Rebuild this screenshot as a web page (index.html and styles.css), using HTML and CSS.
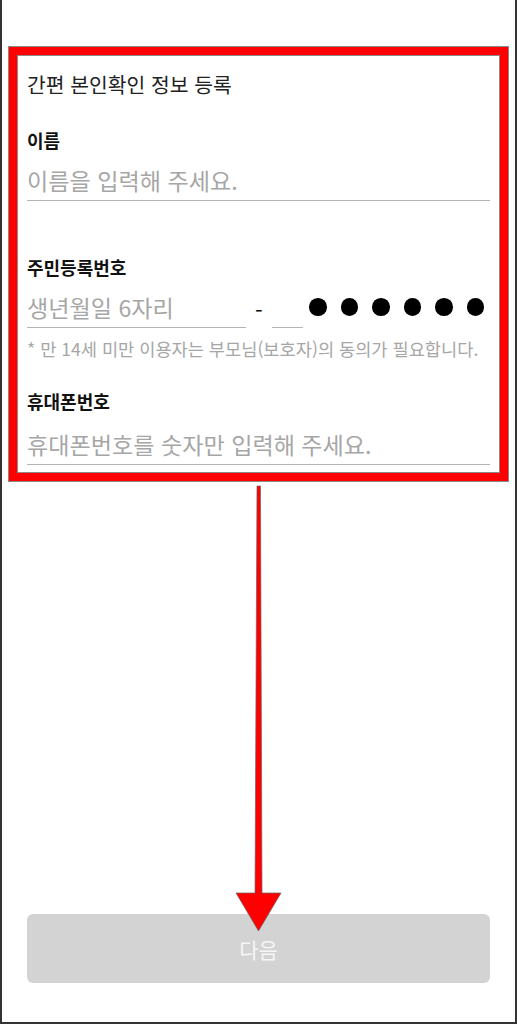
FILE: index.html
```html
<!DOCTYPE html>
<html lang="ko">
<head>
<meta charset="utf-8">
<title>간편 본인확인 정보 등록</title>
<link rel="stylesheet" href="styles.css">
</head>
<body>
<div class="frame">
  <main class="content">
    <h1 class="title">간편 본인확인 정보 등록</h1>

    <div class="label label-name">이름</div>
    <div class="field field-name"><span class="ph">이름을 입력해 주세요.</span></div>

    <div class="label label-rrn">주민등록번호</div>
    <div class="rrn-row">
      <div class="field field-birth"><span class="ph">생년월일 6자리</span></div>
      <span class="dash">-</span>
      <div class="field field-gender"></div>
      <div class="dots">
        <span class="dot"></span><span class="dot"></span><span class="dot"></span><span class="dot"></span><span class="dot"></span><span class="dot"></span>
      </div>
    </div>
    <p class="note">* 만 14세 미만 이용자는 부모님(보호자)의 동의가 필요합니다.</p>

    <div class="label label-phone">휴대폰번호</div>
    <div class="field field-phone"><span class="ph">휴대폰번호를 숫자만 입력해 주세요.</span></div>

    <button class="next" type="button">다음</button>
  </main>

  <div class="highlight"></div>
  <svg class="arrow" width="517" height="1024" viewBox="0 0 517 1024">
    <polygon points="257,486 260.5,486 262,893 281,893 258.5,931 236,893 255,893" fill="#ff0000" stroke="#666" stroke-width="0.7"/>
  </svg>
</div>
</body>
</html>
```

FILE: styles.css
```css
html, body {
  margin: 0;
  padding: 0;
  background: #ffffff;
}

body {
  font-family: "Noto Sans CJK KR", "Noto Sans", sans-serif;
}

.frame {
  position: relative;
  width: 517px;
  height: 1024px;
  box-sizing: border-box;
  border-left: 2px solid #333333;
  border-right: 2px solid #333333;
  border-bottom: 2px solid #333333;
  overflow: hidden;
}

.content {
  height: 100%;
  box-sizing: border-box;
  padding: 72px 25px 39px 25px;
  display: flex;
  flex-direction: column;
}

.title {
  margin: 0;
  font-size: 20.4px;
  line-height: 24px;
  font-weight: 400;
  color: #222222;
}

.label {
  font-size: 18px;
  line-height: 22px;
  font-weight: 700;
  color: #111111;
}

.label-name { margin-top: 33px; }
.label-rrn { margin-top: 55px; }
.label-phone { margin-top: 31px; }

.field {
  padding: 4px 0 5px 0;
  height: 30px;
  line-height: 30px;
  font-size: 23.1px;
  border-bottom: 1.5px solid #b3b3b3;
  white-space: nowrap;
}

.ph {
  color: #a6a6a6;
}

.field-name { margin-top: 10px; }
.field-phone { margin-top: 13px; }

.rrn-row {
  margin-top: 10px;
  display: flex;
  align-items: flex-start;
}

.field-birth {
  width: 219px;
  flex: none;
}

.dash {
  flex: none;
  margin-left: 9px;
  width: 7px;
  margin-top: 4px;
  height: 30px;
  line-height: 34px;
  font-size: 22px;
  color: #111111;
  text-align: center;
}

.field-gender {
  flex: none;
  width: 31px;
  margin-left: 10px;
}

.dots {
  flex: none;
  margin-left: 6px;
  display: flex;
  gap: 14px;
  padding-top: 10px;
}

.dot {
  width: 17.5px;
  height: 17.5px;
  border-radius: 50%;
  background: #000000;
}

.note {
  margin: 11px 0 0 0;
  font-size: 17.6px;
  line-height: 20px;
  color: #a6a6a6;
  white-space: nowrap;
}

.next {
  margin-top: auto;
  height: 69px;
  width: 100%;
  border: none;
  border-radius: 6px;
  background: #d3d3d3;
  color: #f6f6f6;
  font-family: "Noto Sans CJK KR", "Noto Sans", sans-serif;
  font-size: 21px;
  padding: 0;
}

.highlight {
  position: absolute;
  left: 7px;
  top: 47px;
  width: 499px;
  height: 434px;
  box-sizing: border-box;
  border: 8px solid #ff0000;
  box-shadow: 0 0 0 1px #8a8a8a, inset 0 0 0 1px #8a8a8a;
}

.arrow {
  position: absolute;
  left: -2px;
  top: 0;
}
```
